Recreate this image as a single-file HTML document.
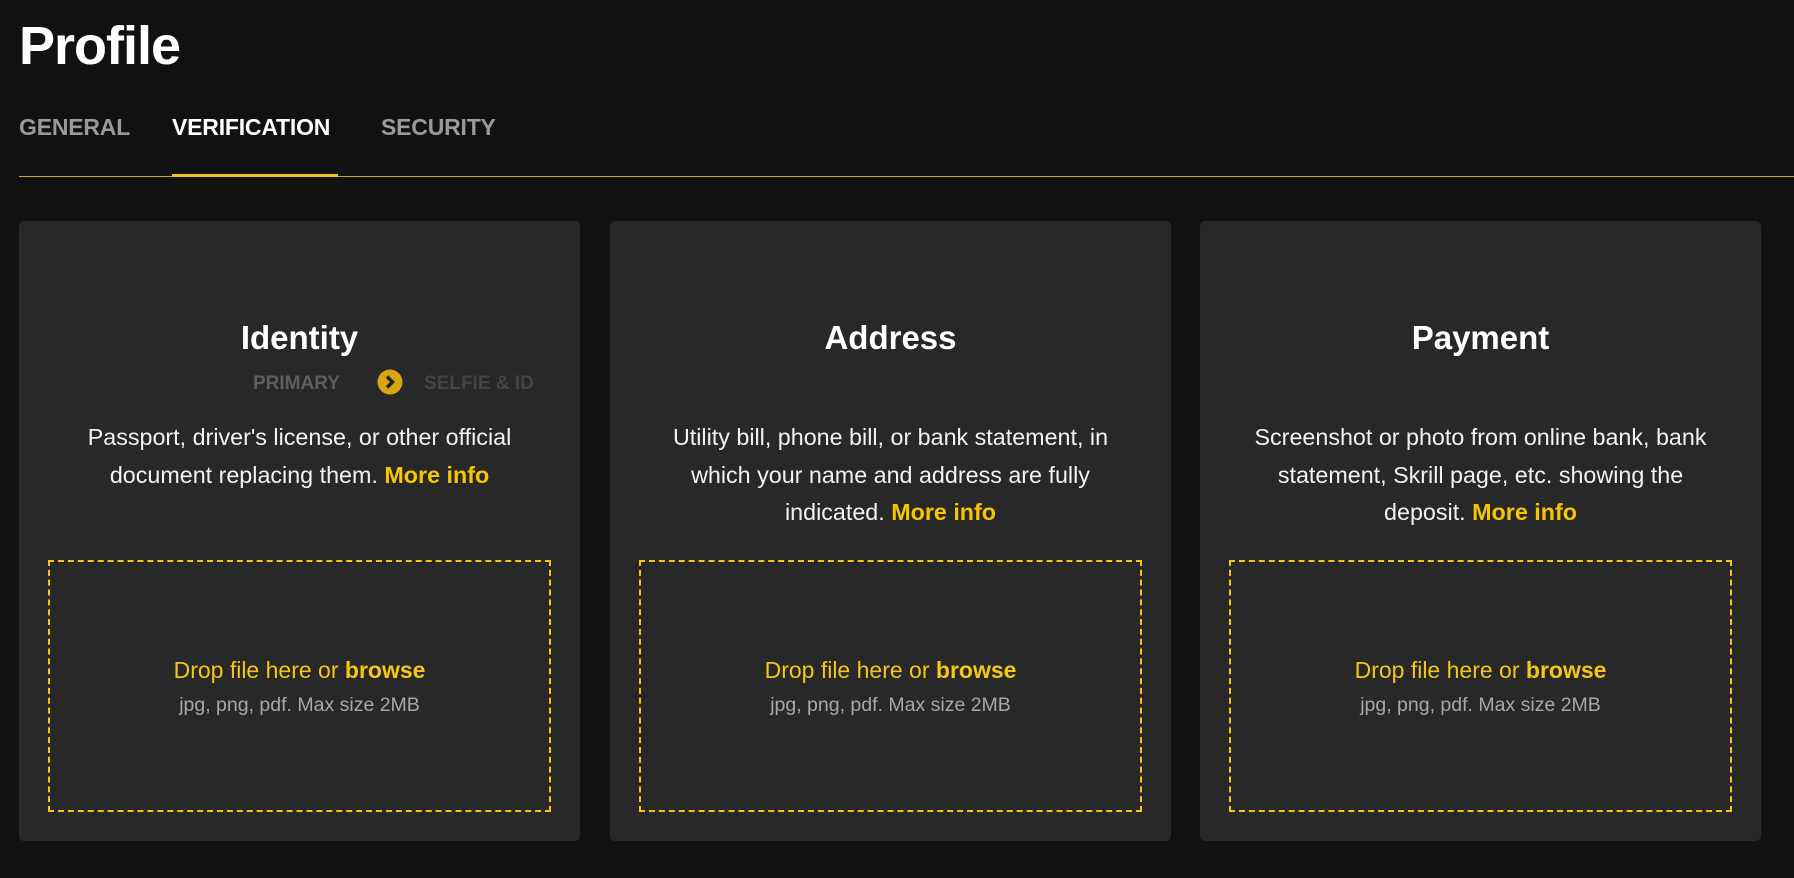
<!DOCTYPE html>
<html><head><meta charset="utf-8"><style>
*{margin:0;padding:0;box-sizing:border-box}
body{width:1794px;height:878px;background:#111111;font-family:"Liberation Sans",sans-serif;color:#fff;position:relative;overflow:hidden}
h1{position:absolute;left:19px;top:15px;font-size:54px;font-weight:bold;letter-spacing:-1px}
.tab{position:absolute;top:114px;font-size:23px;font-weight:bold;color:#9a9a9a;letter-spacing:-0.2px}
.line{position:absolute;left:19px;right:0;top:176px;height:1px;background:#d9a514}
.act{position:absolute;left:172px;width:166px;top:174px;height:3px;background:#f5bf1a}
.card{position:absolute;top:221px;width:561px;height:620px;background:#282828;border-radius:5px;text-align:center}
.t{position:absolute;top:98px;left:0;right:0;font-size:33px;font-weight:bold}
.desc{position:absolute;top:198px;left:0;right:0;font-size:23.3px;line-height:37.5px;color:#f2f2f2;white-space:nowrap}
.desc b{color:#f7c600}
.drop{position:absolute;left:29px;top:339px;width:503px;height:252px;border:2px dashed #f5c518}
.d1{position:absolute;top:95px;left:0;right:0;font-size:23px;color:#f5c518}
.d2{position:absolute;top:132px;left:0;right:0;font-size:19.5px;color:#a8a8a8}
</style></head><body>
<h1>Profile</h1>
<div class="tab" style="left:19px">GENERAL</div>
<div class="tab" style="left:172px;color:#fff">VERIFICATION</div>
<div class="tab" style="left:381px">SECURITY</div>
<div class="line"></div><div class="act"></div>

<div class="card" style="left:19px">
<div class="t">Identity</div>
<div style="position:absolute;top:152px;left:234px;font-size:19px;font-weight:bold;color:#5e5e5e">PRIMARY</div>
<svg style="position:absolute;left:358px;top:148px" width="26" height="26" viewBox="0 0 26 26"><circle cx="13" cy="13" r="12.5" fill="#d9a514"/><path d="M10 7.5 L15.5 13 L10 18.5" stroke="#222" stroke-width="3.5" fill="none"/></svg>
<div style="position:absolute;top:152px;left:405px;font-size:19px;font-weight:bold;color:#444">SELFIE &amp; ID</div>
<div class="desc">Passport, driver's license, or other official<br>document replacing them. <b>More info</b></div>
<div class="drop"><div class="d1">Drop file here or <b>browse</b></div><div class="d2">jpg, png, pdf. Max size 2MB</div></div>
</div>

<div class="card" style="left:610px">
<div class="t">Address</div>
<div class="desc">Utility bill, phone bill, or bank statement, in<br>which your name and address are fully<br>indicated. <b>More info</b></div>
<div class="drop"><div class="d1">Drop file here or <b>browse</b></div><div class="d2">jpg, png, pdf. Max size 2MB</div></div>
</div>

<div class="card" style="left:1200px">
<div class="t">Payment</div>
<div class="desc">Screenshot or photo from online bank, bank<br>statement, Skrill page, etc. showing the<br>deposit. <b>More info</b></div>
<div class="drop"><div class="d1">Drop file here or <b>browse</b></div><div class="d2">jpg, png, pdf. Max size 2MB</div></div>
</div>
</body></html>
